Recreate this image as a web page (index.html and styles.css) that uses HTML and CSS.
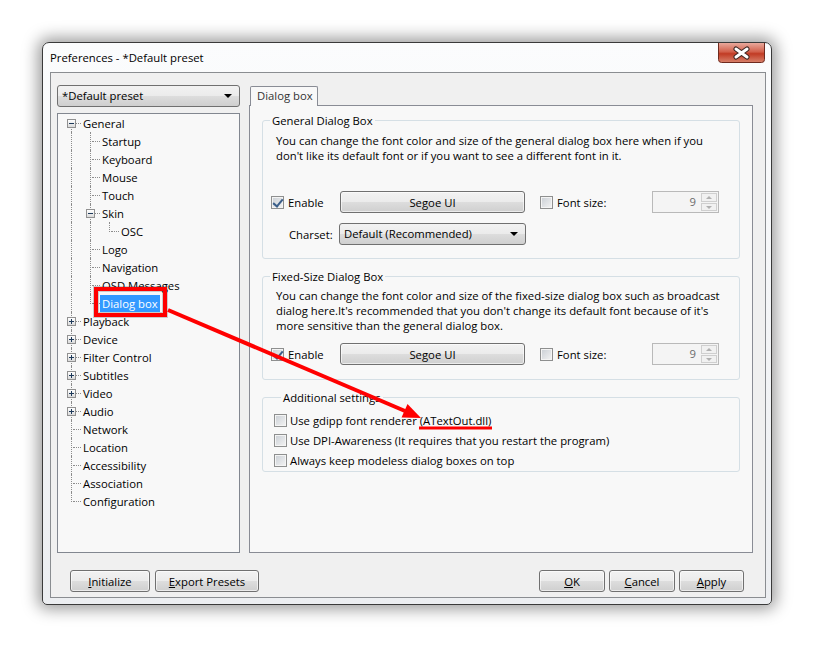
FILE: index.html
```html
<!DOCTYPE html>
<html>

<head>
    <title>Preferences</title>
    <link rel="stylesheet" href="styles.css">
</head>

<body>
    <div class="desk">
        <div class="window">
            <div class="titlebar">
                <span class="title">Preferences - *Default preset</span>
                <span class="close">
                    <svg width="47" height="20" viewBox="0 0 47 20">
                        <defs>
                            <linearGradient id="cl" x1="0" y1="0" x2="0" y2="1">
                                <stop offset="0" stop-color="#e9a99c"/>
                                <stop offset="0.45" stop-color="#d2604b"/>
                                <stop offset="0.55" stop-color="#c13b24"/>
                                <stop offset="1" stop-color="#d8826c"/>
                            </linearGradient>
                        </defs>
                        <path d="M0.5 0 V16.5 Q0.5 19.5 3.5 19.5 H43.5 Q46.5 19.5 46.5 16.5 V0" fill="url(#cl)" stroke="#6e2a1f"/>
                        <path d="M18 6 L29 14 M29 6 L18 14" stroke="#3b2521" stroke-width="5" stroke-linecap="round"/>
                        <path d="M18 6 L29 14 M29 6 L18 14" stroke="#fff" stroke-width="3" stroke-linecap="round"/>
                    </svg>
                </span>
            </div>
            <div class="client">
                <div class="main">
                    <div class="left">
                        <div class="combo preset">*Default preset<i class="arrow"></i></div>
                        <div class="tree">
                            <div class="row"><span class="c top ex"><b class="box minus"></b></span><span class="lbl">General</span></div>
                            <div class="row"><span class="c v"></span><span class="c t"></span><span class="lbl">Startup</span></div>
                            <div class="row"><span class="c v"></span><span class="c t"></span><span class="lbl">Keyboard</span></div>
                            <div class="row"><span class="c v"></span><span class="c t"></span><span class="lbl">Mouse</span></div>
                            <div class="row"><span class="c v"></span><span class="c t"></span><span class="lbl">Touch</span></div>
                            <div class="row"><span class="c v"></span><span class="c t ex"><b class="box minus"></b></span><span class="lbl">Skin</span></div>
                            <div class="row"><span class="c v"></span><span class="c v"></span><span class="c l"></span><span class="lbl">OSC</span></div>
                            <div class="row"><span class="c v"></span><span class="c t"></span><span class="lbl">Logo</span></div>
                            <div class="row"><span class="c v"></span><span class="c t"></span><span class="lbl">Navigation</span></div>
                            <div class="row"><span class="c v"></span><span class="c t"></span><span class="lbl">OSD Messages</span></div>
                            <div class="row"><span class="c v"></span><span class="c l"></span><span class="lbl sel">Dialog box</span></div>
                            <div class="row"><span class="c t ex"><b class="box plus"></b></span><span class="lbl">Playback</span></div>
                            <div class="row"><span class="c t ex"><b class="box plus"></b></span><span class="lbl">Device</span></div>
                            <div class="row"><span class="c t ex"><b class="box plus"></b></span><span class="lbl">Filter Control</span></div>
                            <div class="row"><span class="c t ex"><b class="box plus"></b></span><span class="lbl">Subtitles</span></div>
                            <div class="row"><span class="c t ex"><b class="box plus"></b></span><span class="lbl">Video</span></div>
                            <div class="row"><span class="c t ex"><b class="box plus"></b></span><span class="lbl">Audio</span></div>
                            <div class="row"><span class="c t"></span><span class="lbl">Network</span></div>
                            <div class="row"><span class="c t"></span><span class="lbl">Location</span></div>
                            <div class="row"><span class="c t"></span><span class="lbl">Accessibility</span></div>
                            <div class="row"><span class="c t"></span><span class="lbl">Association</span></div>
                            <div class="row"><span class="c l"></span><span class="lbl">Configuration</span></div>
                        </div>
                    </div>
                    <div class="right">
                        <div class="tabs"><div class="tab">Dialog box</div></div>
                        <div class="panel">
                            <fieldset class="group g1">
                                <legend>General Dialog Box</legend>
                                <p>You can change the font color and size of the general dialog box here when if you<br>don't like its default font or if you want to see a different font in it.</p>
                                <div class="fontrow">
                                    <span class="chk enable"><i class="cb on"></i>Enable</span>
                                    <span class="btn face">Segoe UI</span>
                                    <span class="chk fsize"><i class="cb"></i>Font size:</span>
                                    <span class="spin"><span class="val">9</span><span class="arrows"><i class="up"></i><i class="down"></i></span></span>
                                </div>
                                <div class="charrow">
                                    <span class="charlbl">Charset:</span>
                                    <span class="combo charset">Default (Recommended)<i class="arrow"></i></span>
                                </div>
                            </fieldset>
                            <fieldset class="group g2">
                                <legend>Fixed-Size Dialog Box</legend>
                                <p>You can change the font color and size of the fixed-size dialog box such as broadcast<br>dialog here.It's recommended that you don't change its default font because of it's<br>more sensitive than the general dialog box.</p>
                                <div class="fontrow">
                                    <span class="chk enable"><i class="cb on"></i>Enable</span>
                                    <span class="btn face">Segoe UI</span>
                                    <span class="chk fsize"><i class="cb"></i>Font size:</span>
                                    <span class="spin"><span class="val">9</span><span class="arrows"><i class="up"></i><i class="down"></i></span></span>
                                </div>
                            </fieldset>
                            <fieldset class="group g3">
                                <legend>Additional settings</legend>
                                <div class="opt"><i class="cb"></i>Use gdipp font renderer (ATextOut.dll)</div>
                                <div class="opt"><i class="cb"></i>Use DPI-Awareness (It requires that you restart the program)</div>
                                <div class="opt"><i class="cb"></i>Always keep modeless dialog boxes on top</div>
                            </fieldset>
                        </div>
                    </div>
                </div>
                <div class="footer">
                    <div class="btns">
                        <span class="btn init"><u>I</u>nitialize</span>
                        <span class="btn export"><u>E</u>xport Presets</span>
                    </div>
                    <div class="btns right-btns">
                        <span class="btn small"><u>O</u>K</span>
                        <span class="btn small"><u>C</u>ancel</span>
                        <span class="btn small"><u>A</u>pply</span>
                    </div>
                </div>
            </div>
        </div>
    </div>

    <!-- red annotations drawn over the dialog -->
    <svg class="marks" width="814" height="648" viewBox="0 0 814 648">
        <rect x="96" y="289" width="69" height="26" fill="none" stroke="rgba(0,0,0,0.18)" stroke-width="6"/>
        <rect x="96" y="289" width="69" height="26" fill="none" stroke="#f00" stroke-width="4"/>
        <line x1="168" y1="310" x2="405" y2="411" stroke="#f00" stroke-width="4"/>
        <polygon points="421,418 401.5,417.5 407.5,404" fill="#f00"/>
        <line x1="419" y1="428" x2="492" y2="428" stroke="#f00" stroke-width="3"/>
    </svg>
</body>

</html>
```

FILE: styles.css
```css
* {
    box-sizing: border-box;
}

body {
    margin: 0;
    background: #fff;
    font-family: "Open Sans", "Noto Sans", sans-serif;
    font-size: 11.3px;
    color: #000;
}

.desk {
    padding: 42px 0 0 42px;
    height: 648px;
}

.window {
    width: 730px;
    height: 563px;
    border: 1px solid #3a3a3a;
    border-radius: 7px 7px 5px 5px;
    background: linear-gradient(#fbfcfd, #eceef1);
    box-shadow: 0 0 16px 4px rgba(0, 0, 0, 0.4);
    padding: 0 5px 6px 7px;
    display: flex;
    flex-direction: column;
}

.titlebar {
    height: 29px;
    display: flex;
    justify-content: space-between;
    align-items: flex-start;
}

.title {
    line-height: 15px;
    padding-top: 7px;
}

.close {
    margin-right: 1px;
    height: 20px;
}

.close svg {
    display: block;
}

.client {
    flex: 1;
    border: 1px solid #8a8d91;
    background: #f0f0f0;
    padding: 12px 12px 0 6px;
    display: flex;
    flex-direction: column;
}

.main {
    flex: 1;
    display: flex;
    gap: 9px;
    min-height: 0;
}

.left {
    width: 183px;
    display: flex;
    flex-direction: column;
}

/* combo boxes and buttons */
.combo {
    position: relative;
    height: 22px;
    line-height: 20px;
    border: 1px solid #707070;
    border-radius: 3px;
    background: linear-gradient(#f2f2f2 0%, #ebebeb 50%, #dddddd 51%, #cfcfcf 100%);
    padding-left: 4px;
    white-space: nowrap;
}

.combo .arrow {
    position: absolute;
    right: 7px;
    top: 8px;
    border-left: 4px solid transparent;
    border-right: 4px solid transparent;
    border-top: 4px solid #000;
}

.preset {
    margin-bottom: 6px;
}

.btn {
    display: inline-flex;
    justify-content: center;
    align-items: center;
    height: 22px;
    border: 1px solid #707070;
    border-radius: 3px;
    background: linear-gradient(#f2f2f2 0%, #ebebeb 50%, #dddddd 51%, #cfcfcf 100%);
    box-shadow: inset 0 0 0 1px rgba(255, 255, 255, 0.6);
    white-space: nowrap;
}

/* tree view */
.tree {
    flex: 1;
    border: 1px solid #828790;
    background: #f8f8f8;
    padding-left: 4px;
}

.row {
    display: flex;
    align-items: center;
    height: 18px;
}

.c {
    position: relative;
    width: 19px;
    height: 18px;
    flex-shrink: 0;
}

.c::before,
.c::after {
    content: "";
    position: absolute;
}

.c.v::before,
.c.t::before {
    left: 9px;
    top: 0;
    bottom: 0;
    border-left: 1px dotted #8c8c8c;
}

.c.l::before {
    left: 9px;
    top: 0;
    height: 10px;
    border-left: 1px dotted #8c8c8c;
}

.c.top::before {
    left: 9px;
    top: 9px;
    bottom: 0;
    border-left: 1px dotted #8c8c8c;
}

.c.t::after,
.c.l::after,
.c.top::after {
    left: 11px;
    right: 0;
    top: 9px;
    border-top: 1px dotted #8c8c8c;
}

.box {
    position: absolute;
    left: 5px;
    top: 5px;
    width: 9px;
    height: 9px;
    border: 1px solid #919191;
    background: linear-gradient(#ffffff, #dadada);
    z-index: 1;
}

.box::before,
.box::after {
    content: "";
    position: absolute;
    background: #1e3a5a;
}

.box::before {
    left: 1px;
    top: 3px;
    width: 5px;
    height: 1px;
}

.box.plus::after {
    left: 3px;
    top: 1px;
    width: 1px;
    height: 5px;
}

.lbl {
    padding: 0 2px;
    line-height: 17px;
    white-space: nowrap;
}

.lbl.sel {
    background: #3399ff;
    color: #fff;
}

/* tab page */
.right {
    width: 504px;
    display: flex;
    flex-direction: column;
}

.tabs {
    display: flex;
    padding: 1px 0 0 1px;
}

.tab {
    width: 68px;
    height: 20px;
    line-height: 18px;
    padding-left: 6px;
    border: 1px solid #898c95;
    border-bottom: none;
    border-radius: 2px 2px 0 0;
    background: #f8f8f8;
    color: #333;
    margin-bottom: -1px;
    position: relative;
    z-index: 1;
}

.panel {
    flex: 1;
    border: 1px solid #898c95;
    background: #f8f8f8;
    padding: 7px 12px 0 12px;
}

.group {
    margin: 0;
    padding: 0;
    min-width: 0;
    border: 1px solid #d5dfe5;
    border-radius: 3px;
}

.group legend {
    margin-left: 7px;
    padding: 0 2px;
    line-height: 15px;
}

.group p {
    margin: 5px 0 0 13px;
    line-height: 15px;
    white-space: nowrap;
}

.g1 {
    padding-bottom: 13px;
}

.g2 {
    margin-top: 10px;
    padding-bottom: 14px;
}

.g2 p {
    margin-top: 4px;
}

.g3 {
    margin-top: 10px;
    padding: 5px 0 1px 11px;
}

.fontrow,
.charrow {
    display: flex;
    align-items: center;
    height: 22px;
}

.fontrow {
    padding-left: 8px;
    margin-top: 28px;
}

.g2 .fontrow {
    margin-top: 10px;
}

.chk {
    display: flex;
    align-items: center;
    white-space: nowrap;
}

.enable {
    width: 69px;
}

.face {
    width: 185px;
}

.fsize {
    width: 112px;
    margin-left: 15px;
}

.cb {
    position: relative;
    width: 13px;
    height: 13px;
    margin-right: 4px;
    flex-shrink: 0;
    border: 1px solid #8e8f8f;
    background: linear-gradient(135deg, #c9ced4, #f4f4f4);
    box-shadow: inset 0 0 0 1px #f4f4f4;
}

.cb.on::after {
    content: "";
    position: absolute;
    left: 3px;
    top: 0px;
    width: 4px;
    height: 8px;
    border-right: 2px solid #3b5f8a;
    border-bottom: 2px solid #3b5f8a;
    transform: rotate(40deg);
}

.spin {
    display: flex;
    width: 67px;
    height: 22px;
    border: 1px solid #b9b9b9;
    background: #f4f4f4;
}

.spin .val {
    flex: 1;
    text-align: right;
    padding-right: 5px;
    line-height: 20px;
    color: #6d6d6d;
}

.arrows {
    display: flex;
    flex-direction: column;
    gap: 1px;
    padding: 1px 1px 1px 0;
    width: 17px;
}

.arrows i {
    flex: 1;
    position: relative;
    border: 1px solid #cfcfcf;
    background: #f1f1f1;
}

.arrows i::after {
    content: "";
    position: absolute;
    left: 4px;
    top: 2px;
    border-left: 3px solid transparent;
    border-right: 3px solid transparent;
}

.arrows .up::after {
    border-bottom: 3px solid #b0b0b0;
}

.arrows .down::after {
    border-top: 3px solid #b0b0b0;
}

.charrow {
    margin-top: 10px;
    padding-left: 26px;
}

.charlbl {
    width: 50px;
}

.charset {
    width: 187px;
}

.opt {
    display: flex;
    align-items: center;
    height: 20px;
    white-space: nowrap;
}

.opt .cb {
    margin-right: 3px;
}

/* bottom buttons */
.footer {
    display: flex;
    justify-content: space-between;
    padding: 17px 9px 5px 13px;
}

.btns {
    display: flex;
    gap: 5px;
}

.right-btns {
    gap: 4px;
}

.init {
    width: 80px;
}

.export {
    width: 104px;
}

.small {
    width: 66px;
}

.small:last-child {
    width: 65px;
}

.marks {
    position: absolute;
    left: 0;
    top: 0;
    pointer-events: none;
}
```
